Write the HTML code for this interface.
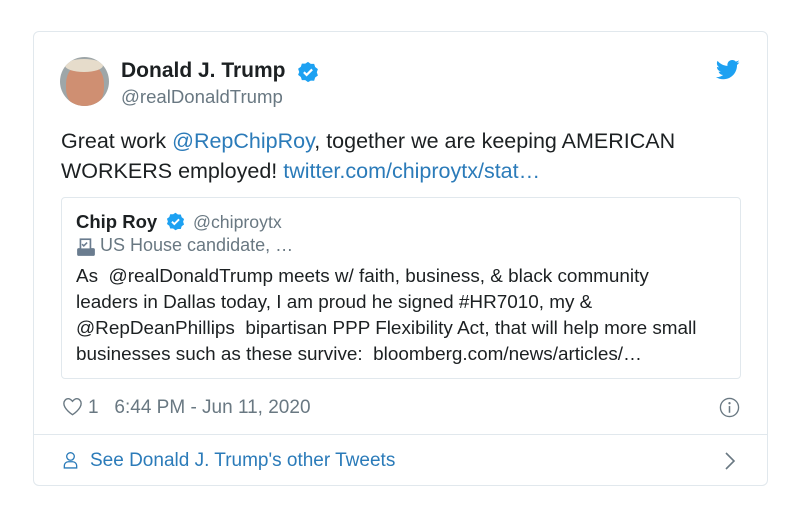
<!DOCTYPE html>
<html><head><meta charset="utf-8"><style>
*{margin:0;padding:0;box-sizing:border-box}
body{width:799px;height:516px;background:#fff;font-family:"Liberation Sans",sans-serif;position:relative;overflow:hidden}
.card{position:absolute;left:33px;top:31px;width:735px;height:455px;border:1px solid #e1e8ed;border-radius:6px}
.abs{position:absolute;white-space:nowrap}
.blue{color:#2b7bb9}
</style></head><body>
<div class="card"></div>
<div class="abs" style="left:60px;top:57px;width:49px;height:49px;border-radius:50%;background:#9ea6a8;overflow:hidden">
<div class="abs" style="left:6px;top:6px;width:38px;height:46px;border-radius:45%;background:#cf8f72"></div>
<div class="abs" style="left:5px;top:2px;width:38px;height:13px;border-radius:50%;background:#e6dccb"></div></div>
<div class="abs" style="left:121px;top:59px;font-size:21px;font-weight:bold;color:#1c2022">Donald J. Trump</div>
<svg class="abs" style="left:297px;top:61px" width="22" height="22" viewBox="0 0 24 24"><path fill="#1da1f2" d="M12 1l3 2.2 3.700-.1 1.1 3.5 3 2.2-1.2 3.5 1.2 3.5-3 2.2-1.1 3.5-3.7-.1L12 23l-3-2.2-3.7.1-1.1-3.5-3-2.2L2.4 12 1.2 8.5l3-2.2 1.1-3.5 3.7.1z"/><path d="M7.5 12.2l3 3 6-6" stroke="#fff" stroke-width="2.4" fill="none"/></svg>
<div class="abs" style="left:121px;top:86px;font-size:18.6px;color:#697882">@realDonaldTrump</div>
<svg class="abs" style="left:716px;top:60px" width="24" height="20" viewBox="0 0 24 20"><path fill="#1da1f2" d="M23.6 2.3c-.9.4-1.8.6-2.8.8 1-.6 1.8-1.6 2.1-2.7-.9.6-2 1-3.1 1.2C18.9.6 17.6 0 16.2 0c-2.7 0-4.8 2.2-4.8 4.8 0 .4 0 .8.1 1.1C7.4 5.7 3.9 3.8 1.6.9c-.4.7-.7 1.6-.7 2.4 0 1.7.9 3.2 2.2 4-.8 0-1.5-.2-2.2-.6v.1c0 2.3 1.7 4.3 3.9 4.7-.4.1-.8.2-1.3.2-.3 0-.6 0-.9-.1.6 1.9 2.4 3.300 4.5 3.4-1.7 1.3-3.7 2.1-6 2.1-.4 0-.8 0-1.2-.1 2.1 1.4 4.7 2.2 7.4 2.2 8.9 0 13.7-7.4 13.7-13.7v-.6c1-.7 1.8-1.6 2.4-2.5z"/></svg>
<div class="abs" style="left:61px;top:126px;font-size:21.5px;line-height:30px;color:#1c2022">Great work <span class="blue">@RepChipRoy</span>, together we are keeping AMERICAN<br>WORKERS employed! <span class="blue">twitter.com/chiproytx/stat…</span></div>
<div class="abs" style="left:61px;top:197px;width:680px;height:182px;border:1px solid #e1e8ed;border-radius:4px"></div>
<div class="abs" style="left:76px;top:211px;font-size:18.5px;font-weight:bold;color:#1c2022">Chip Roy</div>
<svg class="abs" style="left:166px;top:212px" width="19" height="19" viewBox="0 0 24 24"><path fill="#1da1f2" d="M12 1l3 2.2 3.7-.1 1.1 3.5 3 2.2-1.2 3.5 1.2 3.5-3 2.2-1.1 3.5-3.7-.1L12 23l-3-2.2-3.7.1-1.1-3.5-3-2.2L2.4 12 1.2 8.5l3-2.2 1.1-3.5 3.7.1z"/><path d="M7.5 12.2l3 3 6-6" stroke="#fff" stroke-width="2.4" fill="none"/></svg>
<div class="abs" style="left:193px;top:212px;font-size:17.7px;color:#697882">@chiproytx</div>
<svg class="abs" style="left:76px;top:237px" width="20" height="20" viewBox="0 0 18 18"><rect x="1" y="10" width="16" height="7" rx="1.5" fill="#6a7c8f"/><rect x="4" y="2" width="9" height="9" fill="#fff" stroke="#6a7c8f" stroke-width="1.5"/><path d="M5.5 6.5l1.5 1.5 3-3" stroke="#6a7c8f" stroke-width="1.4" fill="none"/></svg>
<div class="abs" style="left:100px;top:235px;font-size:18px;color:#697882">US House candidate, …</div>
<div class="abs" style="left:76px;top:264px;font-size:18.9px;line-height:26px;color:#1c2022">As &nbsp;@realDonaldTrump meets w/ faith, business, &amp; black community<br>leaders in Dallas today, I am proud he signed #HR7010, my &amp;<br>@RepDeanPhillips &nbsp;bipartisan PPP Flexibility Act, that will help more small<br>businesses such as these survive: &nbsp;bloomberg.com/news/articles/…</div>
<svg class="abs" style="left:62px;top:397px" width="21" height="19" viewBox="0 0 24 22"><path d="M12 20.5S2 14 2 7.5C2 4.5 4.3 2 7 2c2 0 3.5 1.2 5 3 1.5-1.8 3-3 5-3 2.7 0 5 2.5 5 5.5 0 6.5-10 13-10 13z" fill="none" stroke="#697882" stroke-width="1.6"/></svg>
<div class="abs" style="left:88px;top:397px;font-size:19px;color:#697882">1 &nbsp;&nbsp;6:44 PM - Jun 11, 2020</div>
<svg class="abs" style="left:719px;top:397px" width="21" height="21" viewBox="0 0 22 22"><circle cx="11" cy="11" r="9.5" fill="none" stroke="#697882" stroke-width="1.4"/><circle cx="11" cy="6.5" r="1.2" fill="#697882"/><path d="M11 9.5v7" stroke="#697882" stroke-width="1.6"/></svg>
<div class="abs" style="left:34px;top:434px;width:733px;height:1px;background:#e1e8ed"></div>
<svg class="abs" style="left:63px;top:450px" width="15" height="20" viewBox="0 0 17 20"><circle cx="8.5" cy="6" r="4.3" fill="none" stroke="#2b7bb9" stroke-width="1.5"/><path d="M1.5 19v-2.5c0-2.5 2-4.5 4.5-4.5h5c2.5 0 4.5 2 4.5 4.5V19z" fill="none" stroke="#2b7bb9" stroke-width="1.5"/></svg>
<div class="abs blue" style="left:90px;top:450px;font-size:19px">See Donald J. Trump's other Tweets</div>
<svg class="abs" style="left:724px;top:451px" width="12" height="20" viewBox="0 0 12 20"><path d="M2 2l8 8-8 8" fill="none" stroke="#697882" stroke-width="1.6"/></svg>
</body></html>
